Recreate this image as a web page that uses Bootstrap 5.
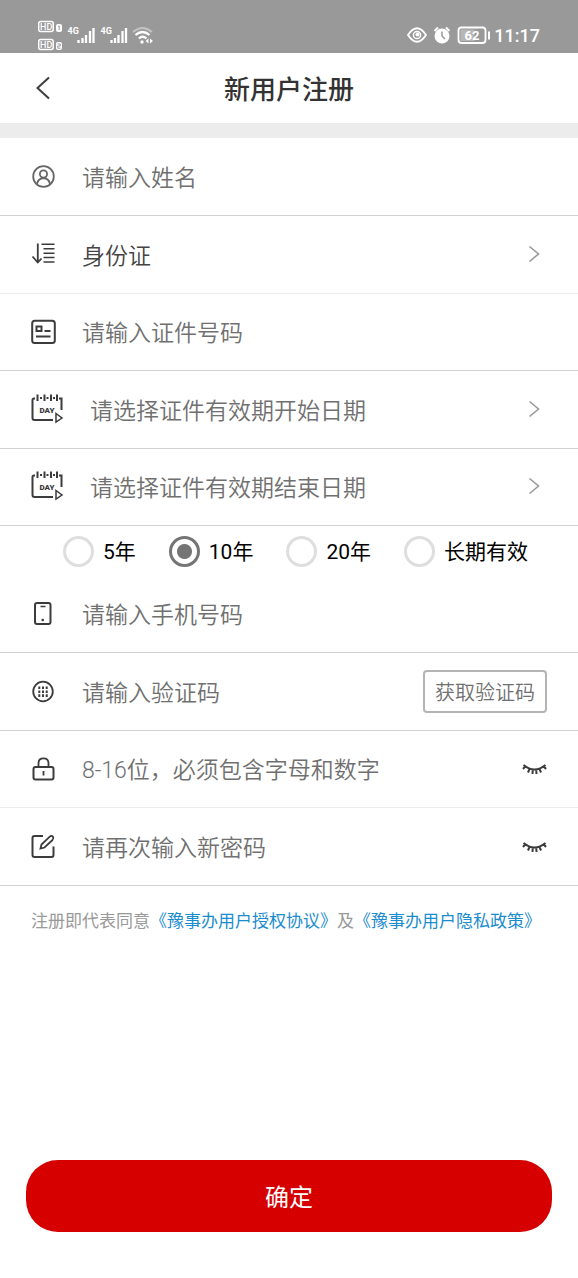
<!DOCTYPE html>
<html lang="zh-CN">
<head>
<meta charset="utf-8">
<meta name="viewport" content="width=device-width, initial-scale=1">
<title>新用户注册</title>
<link href="https://cdn.jsdelivr.net/npm/bootstrap@5.3.0/dist/css/bootstrap.min.css" rel="stylesheet">
<style>
  body { font-family: Roboto, "Noto Sans CJK SC", sans-serif; color: #333; background: #fff; }
  svg { display: block; flex: none; fill: none; stroke: #3c3c3c; stroke-width: 2; }
  svg text { stroke: none; font-family: Roboto, sans-serif; font-weight: 700; }
  .statusbar { height: 53px; background: #999; color: #fff; padding: 17px 38px 0; }
  .statusbar svg { stroke: #fff; }
  .statusbar svg text, .solid { fill: #fff; }
  .statusbar .hd-mark { font-weight: 500; }
  .day-mark { fill: #3c3c3c; font-weight: 900; }
  .clock { font-size: 18px; line-height: 38px; font-weight: 500; }
  .titlebar { height: 70px; padding: 0 36px; }
  .titlebar h1 { font-size: 26px; font-weight: 500; line-height: 36px; color: #333; padding-top: 4px; }
  .titlebar > * { flex: 1 1 0; }
  .titlebar > h1 { flex: none; }
  .strip { height: 15px; background: #ececec; }
  .field { height: 78px; padding: 0 31px; gap: 26px; border-bottom: 1px solid #d2d2d2; }
  .field:nth-child(2n+3) { height: 77px; }
  .field-soft { border-bottom-color: #ececec; }
  .field input, .field select {
    appearance: none; flex: 1 1 0; min-width: 0; padding: 4px 0 0; border: 0; outline: 0;
    background: none; font-size: 23px; line-height: 34px; color: #444; font-weight: 350;
  }
  .field input::placeholder { color: #707070; opacity: 1; }
  .muted-icon { stroke: #666; }
  .chevron { stroke: #999; margin-right: 7px; }
  .btn-code { height: 43px; padding: 2px 10px 0; border: 2px solid #b4b4b4; border-radius: 4px; color: #707070; font-size: 20px; line-height: 36px; font-weight: 350; }
  .terms { padding: 20px 31px; font-size: 17px; line-height: 30px; color: #999; }
  .terms a { color: #1a8cd0; text-decoration: none; }
  .periods { height: 51px; margin-bottom: -2px; padding: 0 31px 0 63px; gap: 33px; color: #000; font-size: 21px; }
  .periods label { gap: 9px; line-height: 30px; }
  .periods input {
    appearance: none; width: 31px; height: 31px; margin: 0; border: 3px solid #dedede; border-radius: 50%; background: #fff;
  }
  .periods input:checked { border-color: #757575; background: radial-gradient(circle, #757575 7px, #fff 8px); }
  .btn-submit { height: 72px; margin: 0 26px 46px; padding: 4px 0 0; border-radius: 32px; background: #d60000; color: #fff; font-size: 24px; }
  .btn-submit:hover { background: #b80000; color: #fff; }
</style>
</head>
<body>
<div class="d-flex flex-column min-vh-100">
  <div class="statusbar d-flex justify-content-between align-items-start">
    <svg width="116" height="36" viewBox="0 0 116 36" aria-label="信号">
      <rect x=".7" y="4.500" width="14.500" height="10" rx="2" stroke-width="1.500"/>
      <text class="hd-mark" x="2" y="12.700" font-size="9">HD</text>
      <rect class="solid" x="18" y="7" width="6" height="8" rx="2" stroke="none"/>
      <path d="M20 9.500L21.200 8.800V13" stroke="#999" stroke-width="1"/>
      <rect x=".7" y="22.500" width="14.500" height="10" rx="2" stroke-width="1.500"/>
      <text class="hd-mark" x="2" y="30.700" font-size="9">HD</text>
      <rect class="solid" x="18" y="25" width="6" height="8" rx="2" stroke="none"/>
      <path d="M19.500 27H22.300V29H19.800V31.200H22.500" stroke="#999" stroke-width="1"/>
      <text x="29.500" y="17" font-size="9">4G</text>
      <path d="M40.500 26v-3M44.500 26v-5M48 26v-8M52 26v-12M55.500 26v-15" stroke-width="2.300"/>
      <text x="62.500" y="17" font-size="9">4G</text>
      <path d="M73.500 26v-3M77 26v-5M80.500 26v-8M84.500 26v-12M88 26v-15" stroke-width="2.300"/>
      <path d="M95 15Q104.500 7 114 15" opacity=".4"/>
      <path d="M97.500 18Q104.500 12 111.500 18M101 21.500Q104.500 18 108.500 21.500" stroke-width="2.300"/>
      <circle class="solid" cx="104" cy="25" r="1.700" stroke="none"/>
      <path class="solid" stroke="none" d="M110.500 21.500v5L107.500 24zM112 21.500v5L115 24z"/>
    </svg>
    <div class="d-flex">
      <svg width="88" height="36" viewBox="0 0 88 36" aria-label="电量 62">
        <path d="M2 18Q11 4.500 20 18Q11 31.500 2 18Z" stroke-width="1.800"/>
        <circle cx="11" cy="18" r="3.600" stroke-width="1.500"/><circle class="solid" cx="11.500" cy="17.500" r="2" stroke="none"/>
        <circle class="solid" cx="36" cy="19" r="7.500" stroke="none"/>
        <path d="M28.500 14L32 10.500M40 10.500L43.500 14"/>
        <path d="M36 14.500V19L39 22" stroke="#999" stroke-width="1.500"/>
        <rect x="52.500" y="10.500" width="27" height="15.500" rx="3" stroke-width="1.800"/>
        <rect class="solid" x="54.500" y="12.500" width="14" height="11.500" opacity=".3" stroke="none"/>
        <path d="M83 14.500v8"/>
        <text x="66" y="23" font-size="13" text-anchor="middle">62</text>
      </svg>
      <span class="clock">11:17</span>
    </div>
  </div>

  <header class="titlebar d-flex align-items-center">
    <a href="#" aria-label="返回"><svg width="14" height="24" viewBox="0 0 14 24"><path d="M13 1.500L1.500 12L13 22.500"/></svg></a>
    <h1 class="mb-0">新用户注册</h1>
    <span></span>
  </header>
  <div class="strip"></div>

  <form class="d-flex flex-column flex-grow-1">
    <div>
      <div class="field d-flex align-items-center">
        <svg class="muted-icon" width="25" height="26" viewBox="0 0 25 26"><circle cx="12.500" cy="12.500" r="10.300" stroke-width="1.800"/><circle cx="12.500" cy="10" r="3.600" stroke-width="1.800"/><path d="M6 20Q7 14.500 12.500 14Q18 14.500 19 20" stroke-width="1.800"/></svg>
        <input type="text" aria-label="姓名" placeholder="请输入姓名">
      </div>
      <div class="field field-soft d-flex align-items-center">
        <svg width="25" height="26" viewBox="0 0 25 26"><path d="M6.800 1.500V20.500M1.500 14.500L6.800 20.500L10.500 16.500" stroke-width="1.800"/><path d="M10.500 2.200H23.500M12.500 6.700H23.500M12.500 11.200H23.500M12.500 15.500H23.500M12.500 20H23.500" stroke-width="1.600"/></svg>
        <select aria-label="证件类型"><option>身份证</option></select>
        <svg class="chevron" width="12" height="20" viewBox="0 0 12 20"><path d="M1.500 1.500L10.500 9L1.500 16.500" stroke-width="1.600"/></svg>
      </div>
      <div class="field d-flex align-items-center">
        <svg width="25" height="26" viewBox="0 0 25 26"><rect x="1.200" y="1.700" width="22.600" height="22.300" rx="2.500"/><rect x="5.500" y="7.500" width="5" height="4.500"/><path d="M13.500 12H19.500M5 17.500H19.500"/></svg>
        <input type="text" aria-label="证件号码" placeholder="请输入证件号码">
      </div>
      <div class="field d-flex align-items-center">
        <svg width="33" height="34" viewBox="0 0 33 34"><path d="M4 5.500H3Q1.500 5.500 1.500 7V25Q1.500 27 3.500 27H22M28 5.500H30.500V17M6.500 1.500V8M13.500 1.500V8M20 1.500V8M26 1.500V8M9 5H11M15.500 5H17.500M22 5H24"/><path d="M25 20.500L31 25L25 29Z" stroke-width="1.500"/><text class="day-mark" x="16" y="20" font-size="8" text-anchor="middle">DAY</text></svg>
        <input type="text" readonly aria-label="有效期开始日期" placeholder="请选择证件有效期开始日期">
        <svg class="chevron" width="12" height="20" viewBox="0 0 12 20"><path d="M1.500 1.500L10.500 9L1.500 16.500" stroke-width="1.600"/></svg>
      </div>
      <div class="field d-flex align-items-center">
        <svg width="33" height="34" viewBox="0 0 33 34"><path d="M4 5.500H3Q1.500 5.500 1.500 7V25Q1.500 27 3.500 27H22M28 5.500H30.500V17M6.500 1.500V8M13.500 1.500V8M20 1.500V8M26 1.500V8M9 5H11M15.500 5H17.500M22 5H24"/><path d="M25 20.500L31 25L25 29Z" stroke-width="1.500"/><text class="day-mark" x="16" y="20" font-size="8" text-anchor="middle">DAY</text></svg>
        <input type="text" readonly aria-label="有效期结束日期" placeholder="请选择证件有效期结束日期">
        <svg class="chevron" width="12" height="20" viewBox="0 0 12 20"><path d="M1.500 1.500L10.500 9L1.500 16.500" stroke-width="1.600"/></svg>
      </div>
    </div>

    <div class="periods d-flex align-items-center text-nowrap">
      <label class="d-flex align-items-center"><input type="radio" name="period">5年</label>
      <label class="d-flex align-items-center"><input type="radio" name="period" checked>10年</label>
      <label class="d-flex align-items-center"><input type="radio" name="period">20年</label>
      <label class="d-flex align-items-center"><input type="radio" name="period">长期有效</label>
    </div>

    <div>
      <div class="field d-flex align-items-center">
        <svg width="25" height="26" viewBox="0 0 25 26"><rect x="4" y="2" width="15.500" height="21" rx="2"/><path d="M9.500 5.500H14.500" stroke-width="1.500"/><circle cx="11.700" cy="19" r="1.300" fill="#3c3c3c" stroke="none"/></svg>
        <input type="tel" aria-label="手机号码" placeholder="请输入手机号码">
      </div>
      <div class="field d-flex align-items-center">
        <svg width="25" height="26" viewBox="0 0 25 26"><circle cx="12" cy="12.500" r="9.800" stroke-width="1.800"/><path d="M8.300 7.500V18M12 7.500V18M15.700 7.500V18" stroke-dasharray="2.600 1.300"/></svg>
        <input type="text" aria-label="验证码" placeholder="请输入验证码">
        <button type="button" class="btn btn-code text-nowrap">获取验证码</button>
      </div>
      <div class="field field-soft d-flex align-items-center">
        <svg width="25" height="26" viewBox="0 0 25 26"><rect x="2.500" y="11" width="20" height="12.500" rx="2"/><path d="M7.500 11V7Q7.500 2.300 12.500 2.300Q17.500 2.300 17.500 7V11M12.500 15V19.500" stroke-width="1.800"/></svg>
        <input type="password" aria-label="密码" placeholder="8-16位，必须包含字母和数字">
        <button type="button" class="btn p-0 border-0" aria-label="显示密码"><svg width="25" height="12" viewBox="0 0 25 12"><path d="M1.500 2Q12.500 11 23.500 2M3.500 3L1 6M7.500 6L6 9.500M10.800 6.500L10.500 11M14.200 6.500L14.500 11M17.500 6L19 9.500M21.500 3L24 6"/></svg></button>
      </div>
      <div class="field d-flex align-items-center">
        <svg width="25" height="26" viewBox="0 0 25 26"><path d="M12 2H3.500Q1.500 2 1.500 4V21Q1.500 23 3.500 23H20.500Q22.500 23 22.500 21V12.500"/><path d="M9.500 14.500L10.500 10.500L18.500 2.800Q20.500 1 22 2.800Q23 4.500 21.500 6L13.500 13.500Z" stroke-width="1.800"/></svg>
        <input type="password" aria-label="确认新密码" placeholder="请再次输入新密码">
        <button type="button" class="btn p-0 border-0" aria-label="显示密码"><svg width="25" height="12" viewBox="0 0 25 12"><path d="M1.500 2Q12.500 11 23.500 2M3.500 3L1 6M7.500 6L6 9.500M10.800 6.500L10.500 11M14.200 6.500L14.500 11M17.500 6L19 9.500M21.500 3L24 6"/></svg></button>
      </div>
    </div>

    <p class="terms m-0">注册即代表同意<a href="#">《豫事办用户授权协议》</a>及<a href="#">《豫事办用户隐私政策》</a></p>
    <button type="submit" class="btn btn-submit mt-auto">确定</button>
  </form>
</div>
<script src="https://cdn.jsdelivr.net/npm/bootstrap@5.3.0/dist/js/bootstrap.bundle.min.js"></script>
</body>
</html>
